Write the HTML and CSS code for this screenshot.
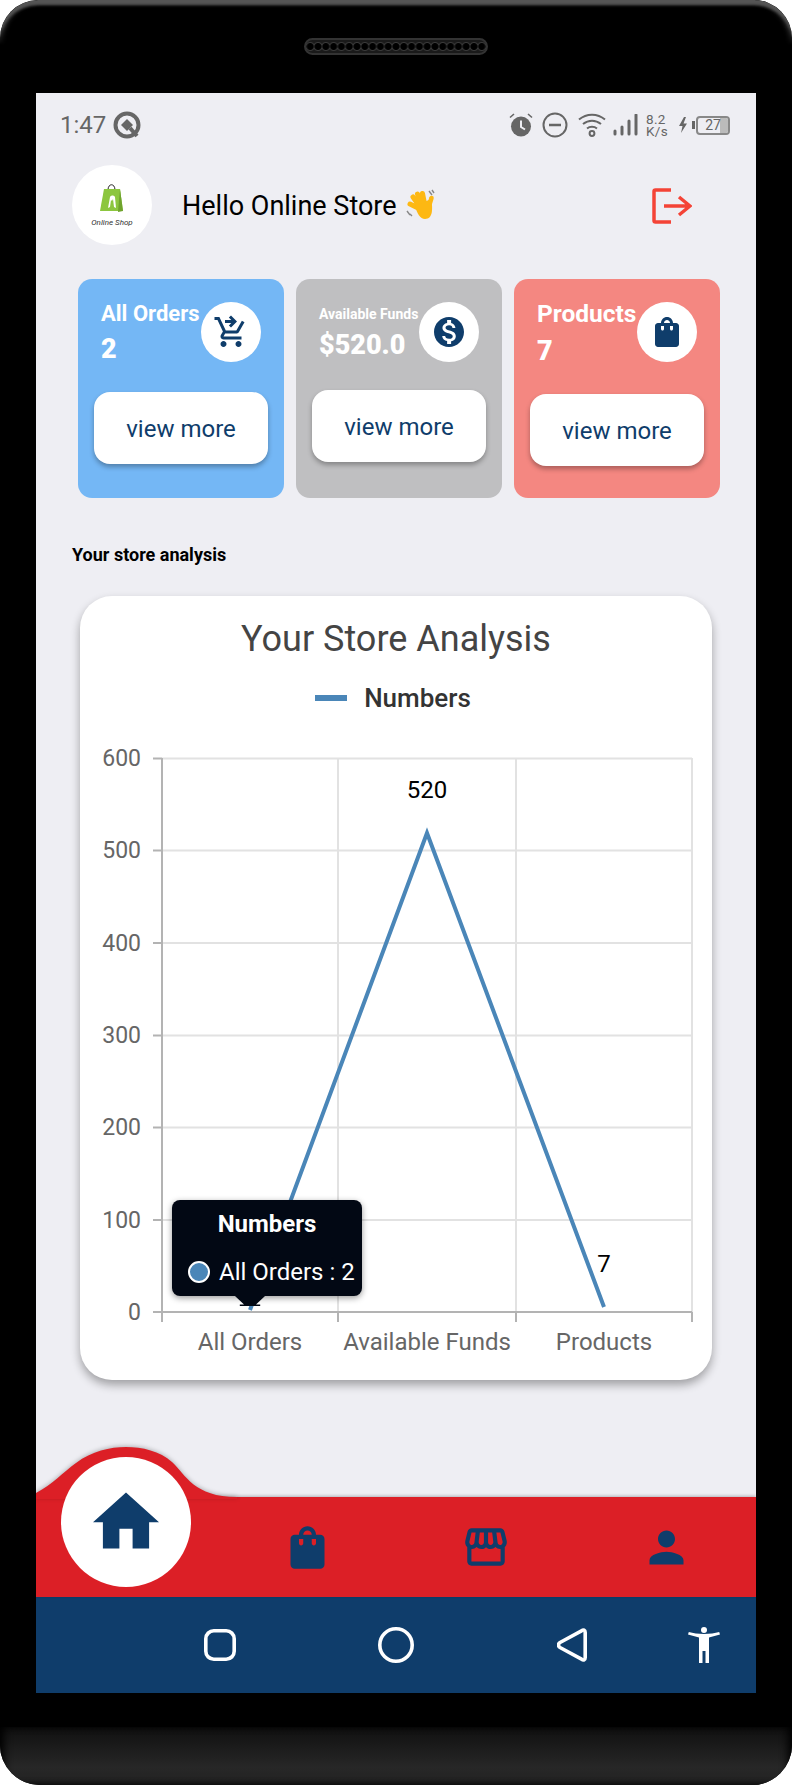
FILE: index.html
```html
<!DOCTYPE html>
<html lang="en">
<head>
    <meta charset="UTF-8">
    <meta name="viewport" content="width=device-width, initial-scale=1.0">
    <title>Online Store</title>
    <link rel="stylesheet" href="styles.css">
</head>
<body>
    <div class="phone">
        <div class="phone-top">
            <div class="speaker"></div>
        </div>

        <div class="screen">
            <!-- Status bar -->
            <div class="status-bar">
                <div class="status-left">
                    <span class="status-time">1:47</span>
                    <svg class="status-q" viewBox="0 0 28 28" width="28" height="28">
                        <circle cx="14" cy="14" r="11.5" fill="none" stroke="#666" stroke-width="4"/>
                        <path d="M14 8l6 6-6 6-6-6z" fill="#666"/>
                        <path d="M17 17l7 8" stroke="#666" stroke-width="4"/>
                    </svg>
                </div>
                <div class="status-right">
                    <svg class="icon-alarm" viewBox="0 0 24 24" width="24" height="24">
                        <circle cx="12" cy="13.5" r="10" fill="#666"/>
                        <path d="M12 7.5v6.5l4 2.5" fill="none" stroke="#eeeef3" stroke-width="2"/>
                        <path d="M1 4.5L5 1M23 4.5L19 1" stroke="#666" stroke-width="1.6"/>
                    </svg>
                    <svg class="icon-dnd" viewBox="0 0 26 26" width="26" height="26">
                        <circle cx="13" cy="13" r="11.5" fill="none" stroke="#666" stroke-width="2"/>
                        <path d="M7 13h12" stroke="#666" stroke-width="2.6"/>
                    </svg>
                    <svg class="icon-wifi" viewBox="0 0 28 24" width="28" height="24">
                        <path d="M1 6.5C8.5 0 19.5 0 27 6.5M5 11C10.5 6.5 17.5 6.5 23 11M9 15.5C11.8 13.3 16.2 13.3 19 15.5" fill="none" stroke="#666" stroke-width="2"/>
                        <circle cx="14" cy="20.5" r="2.4" fill="none" stroke="#666" stroke-width="2"/>
                    </svg>
                    <svg class="icon-signal" viewBox="0 0 26 22" width="26" height="22">
                        <path d="M2 20v-3M9 20v-7M16 20V7M23 20V1" stroke="#666" stroke-width="3" stroke-linecap="round"/>
                    </svg>
                    <div class="net-speed">8.2<br>K/s</div>
                    <svg class="icon-bolt" viewBox="0 0 18 16" width="18" height="16">
                        <path d="M6 0L1 9h3.5L3 16l6-9.5H5.5L8 0z" fill="#666"/>
                        <rect x="14" y="4" width="3" height="8" fill="#666"/>
                    </svg>
                    <div class="battery"><span class="battery-level"></span><span class="battery-text">27</span></div>
                </div>
            </div>

            <!-- Header -->
            <div class="header">
                <div class="avatar">
                    <svg viewBox="0 0 24 32" width="24" height="32">
                        <path d="M8 7C8 0 15 0 15 7" fill="none" stroke="#222" stroke-width="1"/>
                        <path d="M4 6h16l3 22H0z" fill="#8cc63f"/>
                        <path d="M20 6l3 22-5 1z" fill="#6fa32d"/>
                        <path d="M8 25l2-11c1-2 4-2 5 0l1 11-2-1-1-8-1 2-1-1-1 7z" fill="#fff"/>
                    </svg>
                    <span class="avatar-text">Online Shop</span>
                </div>
                <h1 class="hello">Hello Online Store</h1>
                <svg class="wave" viewBox="0 0 34 32" width="34" height="32">
                    <path d="M24 3l3 4M27 2l2 3M2 23l3 4M5 26l2 2" stroke="#888" stroke-width="1.4" fill="none"/>
                    <g stroke="#fdb813" stroke-width="5" stroke-linecap="round">
                        <path d="M15 21L5 16M15 19L8 9M17 18L12.5 6M20 18L17.5 5.5"/>
                        <path d="M24 18L26.5 10" stroke-width="4.5"/>
                    </g>
                    <path d="M10 18L26 11C28 20 28 31 20 31 15 31 12 25 10 18z" fill="#fdb813"/>
                </svg>
                <svg class="logout" viewBox="0 0 40 36" width="40" height="36">
                    <path d="M19 2H3.5a1.5 1.5 0 0 0-1.5 1.5v29A1.5 1.5 0 0 0 3.5 34H19" fill="none" stroke="#f44336" stroke-width="3.5"/>
                    <path d="M12 18h26M27 9l11 9-11 9" fill="none" stroke="#f44336" stroke-width="3.5"/>
                </svg>
            </div>

            <!-- Summary cards -->
            <div class="cards">
                <div class="card card-blue">
                    <div class="card-top">
                        <div class="card-info">
                            <div class="card-title">All Orders</div>
                            <div class="card-value">2</div>
                        </div>
                        <div class="card-icon">
                            <svg viewBox="0 0 24 24" width="36" height="36"><path d="M15.55 13c.75 0 1.41-.41 1.75-1.03L21 5.48 19.25 4.5l-3.7 6.5H8.53L4.27 2H1v2h2l3.6 7.59-1.35 2.44C4.52 15.37 5.48 17 7 17h12v-2H7l1.1-2h7.45zM7 18c-1.1 0-1.99.9-1.99 2S5.9 22 7 22s2-.9 2-2-.9-2-2-2zm10 0c-1.1 0-1.99.9-1.99 2s.89 2 1.99 2 2-.9 2-2-.9-2-2-2zM12 1l4 4-4 4-1.41-1.41L12.17 6H8V4h4.17l-1.59-1.59z"/></svg>
                        </div>
                    </div>
                    <button class="card-btn">view more</button>
                </div>
                <div class="card card-gray">
                    <div class="card-top">
                        <div class="card-info">
                            <div class="card-title">Available Funds</div>
                            <div class="card-value">$520.0</div>
                        </div>
                        <div class="card-icon">
                            <svg viewBox="0 0 24 24" width="36" height="36"><path d="M12 2C6.48 2 2 6.48 2 12s4.48 10 10 10 10-4.48 10-10S17.52 2 12 2zm1.41 16.09V20h-2.67v-1.93c-1.71-.36-3.16-1.46-3.27-3.4h1.96c.1 1.05.82 1.87 2.65 1.87 1.96 0 2.4-.98 2.4-1.59 0-.83-.44-1.61-2.67-2.14-2.48-.6-4.18-1.62-4.18-3.67 0-1.72 1.39-2.84 3.11-3.21V4h2.67v1.95c1.86.45 2.79 1.86 2.87 3.39H14.3c-.05-1.11-.64-1.87-2.22-1.87-1.5 0-2.4.68-2.4 1.64 0 .84.65 1.39 2.67 1.91s4.18 1.39 4.18 3.91c-.01 1.83-1.38 2.83-3.12 3.16z"/></svg>
                        </div>
                    </div>
                    <button class="card-btn">view more</button>
                </div>
                <div class="card card-red">
                    <div class="card-top">
                        <div class="card-info">
                            <div class="card-title">Products</div>
                            <div class="card-value">7</div>
                        </div>
                        <div class="card-icon">
                            <svg viewBox="0 0 24 24" width="36" height="36"><path d="M18 6h-2c0-2.21-1.79-4-4-4S8 3.79 8 6H6c-1.1 0-2 .9-2 2v12c0 1.1.9 2 2 2h12c1.1 0 2-.9 2-2V8c0-1.1-.9-2-2-2zm-8 4c0 .55-.45 1-1 1s-1-.45-1-1V8h2v2zm2-6c1.1 0 2 .9 2 2h-4c0-1.1.9-2 2-2zm4 6c0 .55-.45 1-1 1s-1-.45-1-1V8h2v2z"/></svg>
                        </div>
                    </div>
                    <button class="card-btn">view more</button>
                </div>
            </div>

            <h2 class="section-title">Your store analysis</h2>

            <!-- Chart -->
            <div class="chart-card">
                <div class="chart-title">Your Store Analysis</div>
                <div class="chart-legend"><span class="legend-line"></span>Numbers</div>
                <div class="chart-wrap">
                    <svg class="chart" viewBox="0 -10 632 622" width="632" height="622">
                        <g class="grid">
                            <path d="M82 10.5H612M82 102.5H612M82 195H612M82 287.5H612M82 379.5H612M82 472H612"/>
                            <path d="M258 10V564M436 10V564M612 10V564"/>
                        </g>
                        <g class="axis">
                            <path d="M82 10V574M258 564V574M436 564V574M612 564V574"/>
                            <path d="M73 10.5H82M73 102.5H82M73 195H82M73 287.5H82M73 379.5H82M73 472H82M73 564H612"/>
                        </g>
                        <g class="y-labels">
                            <text x="61" y="18">600</text>
                            <text x="61" y="110">500</text>
                            <text x="61" y="203">400</text>
                            <text x="61" y="295">300</text>
                            <text x="61" y="387">200</text>
                            <text x="61" y="480">100</text>
                            <text x="61" y="572">0</text>
                        </g>
                        <g class="x-labels">
                            <text x="170" y="602">All Orders</text>
                            <text x="347" y="602">Available Funds</text>
                            <text x="524" y="602">Products</text>
                        </g>
                        <polyline class="line" points="170,562 347,85 524,559"/>
                        <g class="point-labels">
                            <text x="347" y="50">520</text>
                            <text x="524" y="524">7</text>
                        </g>
                    </svg>
                    <div class="tooltip">
                        <div class="tooltip-title">Numbers</div>
                        <div class="tooltip-row"><span class="tooltip-dot"></span>All Orders : 2</div>
                    </div>
                </div>
            </div>

            <!-- Bottom nav -->
            <div class="bottom-nav">
                <svg class="nav-hump" viewBox="0 0 202 52" width="202" height="52">
                    <path d="M0 46C17 37 26 26 40 16 56 4 74 0 90 0 106 0 124 4 136 15 150 28 158 50 201 50V52H0Z" fill="#dc1f26"/>
                </svg>
                <div class="nav-item">
                    <div class="nav-home">
                        <svg viewBox="2 3 20 17" width="66" height="57"><path d="M10 20v-6h4v6h5v-8h3L12 3 2 12h3v8z"/></svg>
                    </div>
                </div>
                <div class="nav-item">
                    <svg viewBox="0 0 24 24" width="51" height="51"><path d="M18 6h-2c0-2.21-1.79-4-4-4S8 3.79 8 6H6c-1.1 0-2 .9-2 2v12c0 1.1.9 2 2 2h12c1.1 0 2-.9 2-2V8c0-1.1-.9-2-2-2zm-8 4c0 .55-.45 1-1 1s-1-.45-1-1V8h2v2zm2-6c1.1 0 2 .9 2 2h-4c0-1.1.9-2 2-2zm4 6c0 .55-.45 1-1 1s-1-.45-1-1V8h2v2z"/></svg>
                </div>
                <div class="nav-item">
                    <svg viewBox="0 0 24 24" width="50" height="50"><path d="M21.9 8.89l-1.05-4.37c-.22-.9-1-1.52-1.91-1.52H5.05c-.9 0-1.69.63-1.9 1.52L2.1 8.89c-.24 1.02-.02 2.06.62 2.88.08.11.19.19.28.29V19c0 1.1.9 2 2 2h14c1.1 0 2-.9 2-2v-6.94c.09-.09.2-.18.28-.28.64-.82.87-1.87.62-2.89zm-2.99-3.9l1.05 4.37c.1.42.01.84-.25 1.17-.14.18-.44.47-.94.47-.61 0-1.14-.49-1.21-1.14L16.98 5l1.93-.01zM13 5h1.96l.54 4.52c.05.39-.07.78-.33 1.07-.22.26-.54.41-.95.41-.67 0-1.22-.59-1.22-1.31V5zM8.49 9.52L9.04 5H11v4.69c0 .72-.55 1.31-1.29 1.31-.34 0-.65-.15-.89-.41-.25-.29-.37-.68-.33-1.07zm-4.45-.16L5.05 5h1.97l-.58 4.86c-.08.65-.6 1.14-1.21 1.14-.49 0-.8-.29-.93-.47-.27-.32-.36-.75-.26-1.17zM5 19v-6.03c.08.01.15.03.23.03.87 0 1.66-.36 2.24-.95.6.6 1.4.95 2.31.95.87 0 1.65-.36 2.23-.93.59.57 1.39.93 2.29.93.84 0 1.64-.35 2.24-.95.58.59 1.37.95 2.24.95.08 0 .15-.02.23-.03V19H5z"/></svg>
                </div>
                <div class="nav-item">
                    <svg viewBox="0 0 24 24" width="51" height="51"><path d="M12 12c2.21 0 4-1.79 4-4s-1.79-4-4-4-4 1.79-4 4 1.79 4 4 4zm0 2c-2.67 0-8 1.34-8 4v2h16v-2c0-2.66-5.33-4-8-4z"/></svg>
                </div>
            </div>

            <!-- Android keys -->
            <div class="system-nav">
                <svg viewBox="0 0 32 32" width="32" height="32"><rect x="1.8" y="1.8" width="28.4" height="28.4" rx="8" fill="none" stroke="#fff" stroke-width="3.6"/></svg>
                <svg viewBox="0 0 36 36" width="36" height="36"><circle cx="18" cy="18" r="16.2" fill="none" stroke="#fff" stroke-width="3.6"/></svg>
                <svg viewBox="0 0 30 34" width="30" height="34"><path d="M24.5 2.8C26.5 1.2 28.2 2 28.2 4.5V29.5C28.2 32 26.5 32.8 24.5 31.2L3 19.5C1 18.3 1 15.7 3 14.5Z" fill="none" stroke="#fff" stroke-width="3.6" stroke-linejoin="round"/></svg>
                <svg viewBox="0 0 32 36" width="32" height="36"><circle cx="16" cy="3" r="3" fill="#fff"/><path d="M0 7.5L.8 5C9 7.5 23 7.5 31.2 5L32 7.5 21 10.5V36H17.5V24H14.5V36H11V10.5z" fill="#fff"/></svg>
            </div>
        </div>

        <div class="phone-chin"></div>
        <div class="phone-bottom"></div>
    </div>
</body>
</html>
```

FILE: styles.css
```css
* {
    box-sizing: border-box;
}

body {
    margin: 0;
    background-color: #fff;
    font-family: Roboto, "Liberation Sans", sans-serif;
}

.phone {
    width: 792px;
    height: 1785px;
    background-color: #000;
    border-radius: 38px 38px 40px 40px;
    overflow: hidden;
    display: flex;
    flex-direction: column;
}

.phone-top {
    position: relative;
    height: 93px;
    padding-top: 38px;
    display: flex;
    justify-content: center;
}

/* rim of the case, fades out on the sides */
.phone-top::before {
    content: "";
    position: absolute;
    left: 0;
    right: 0;
    top: 0;
    height: 60px;
    border-radius: 38px 38px 0 0;
    box-shadow: inset 0 7px 3px -2px #555, inset 3px 3px 5px -1px #444, inset -3px 3px 5px -1px #444;
    -webkit-mask-image: linear-gradient(#000 45%, transparent 75%);
    mask-image: linear-gradient(#000 45%, transparent 75%);
}

.speaker {
    width: 184px;
    height: 17px;
    border-radius: 9px;
    border: 2px solid #333;
    background-color: #111;
    background-image: radial-gradient(circle at center, #000 3px, #3a3a3a 4px, #1a1a1a 5px);
    background-size: 7.8px 13px;
    background-position: center;
}

.screen {
    width: 720px;
    height: 1600px;
    margin: 0 auto;
    background-color: #eeeef3;
    display: flex;
    flex-direction: column;
}

.phone-chin {
    height: 34px;
}

.phone-bottom {
    flex: 1;
    background: linear-gradient(#101010, #272727 70%, #222);
    box-shadow: inset 6px 0 8px -2px #000, inset -6px 0 8px -2px #000;
}

/* status bar */
.status-bar {
    height: 60px;
    padding: 4px 26px 0 24px;
    display: flex;
    justify-content: space-between;
    align-items: center;
    color: #666;
}

.status-left {
    display: flex;
    align-items: center;
    gap: 7px;
}

.status-time {
    font-size: 24px;
}

.status-right {
    display: flex;
    align-items: center;
    gap: 8px;
}

.icon-alarm {
    margin-right: 1px;
}

.icon-dnd {
    margin-right: 2px;
}

.icon-wifi,
.icon-signal {
    margin-right: -1px;
}

.net-speed {
    width: 21px;
    font-size: 13.5px;
    line-height: 12.5px;
    letter-spacing: .3px;
    white-space: nowrap;
}

.icon-bolt {
    margin-left: 3px;
    margin-right: -8px;
}

.battery {
    position: relative;
    width: 34px;
    height: 19px;
    border: 2px solid #888;
    border-radius: 4px;
    font-size: 14px;
    line-height: 15px;
    text-align: center;
    overflow: hidden;
}

.battery-level {
    position: absolute;
    top: 0;
    right: 0;
    bottom: 0;
    width: 8px;
    background-color: #bbb;
}

.battery-text {
    position: relative;
}

/* header */
.header {
    height: 80px;
    margin-top: 12px;
    padding: 0 64px 0 36px;
    display: flex;
    align-items: center;
}

.avatar {
    width: 80px;
    height: 80px;
    border-radius: 50%;
    background-color: #fff;
    display: flex;
    flex-direction: column;
    align-items: center;
    padding-top: 18px;
    margin-right: 30px;
}

.avatar-text {
    font-size: 8px;
    font-style: italic;
    color: #333;
    margin-top: 3px;
    white-space: nowrap;
}

.hello {
    margin: 0;
    padding-top: 2px;
    font-size: 27px;
    font-weight: 400;
    color: #000;
}

.wave {
    margin-left: 8px;
    margin-top: -2px;
}

.logout {
    margin-left: auto;
    margin-top: 2px;
}

/* cards */
.cards {
    margin-top: 34px;
    padding: 0 36px 0 42px;
    display: flex;
    gap: 12px;
}

.card {
    width: 206px;
    height: 219px;
    padding: 16px;
    border-radius: 14px;
    color: #fff;
}

.card-blue {
    background-color: #74b7f5;
}

.card-gray {
    background-color: #bfbfc1;
}

.card-red {
    background-color: #f48781;
}

.card-top {
    display: flex;
    justify-content: space-between;
    align-items: flex-start;
    padding: 7px 0 0 7px;
    height: 97px;
}

.card-info {
    white-space: nowrap;
}

.card-title {
    font-size: 22px;
    font-weight: 700;
    line-height: 24px;
}

.card-value {
    font-size: 27px;
    font-weight: 900;
    line-height: 32px;
    margin-top: 7px;
}

.card-gray .card-title {
    font-size: 14px;
}

.card-gray .card-value {
    margin-top: 3px;
}

.card-red .card-title {
    font-size: 24.5px;
}

.card-red .card-value {
    margin-top: 9px;
}

.card-icon {
    width: 60px;
    height: 60px;
    border-radius: 50%;
    background-color: #fff;
    margin-right: 7px;
    flex-shrink: 0;
    display: flex;
    align-items: center;
    justify-content: center;
    fill: #0f3d6b;
}

.card-btn {
    width: 174px;
    height: 72px;
    padding: 2px 0 0;
    border: none;
    border-radius: 16px;
    background-color: #fff;
    color: #0f3d6b;
    font-family: inherit;
    font-size: 24px;
    box-shadow: 0 3px 5px rgba(0, 0, 0, 0.3);
}

.card-gray .card-btn {
    margin-top: -2px;
}

.card-red .card-btn {
    margin-top: 2px;
}

/* chart */
.section-title {
    margin: 46px 0 0 36px;
    font-size: 18px;
    font-weight: 700;
    line-height: 22px;
    color: #000;
}

.chart-card {
    position: relative;
    width: 632px;
    height: 784px;
    margin: 30px 0 0 44px;
    border-radius: 32px;
    background-color: #fff;
    box-shadow: 0 5px 10px rgba(0, 0, 0, 0.33);
}

.chart-title {
    padding-top: 19px;
    text-align: center;
    font-size: 36px;
    line-height: 48px;
    color: #444;
}

.chart-legend {
    margin-top: 20px;
    padding-right: 6px;
    display: flex;
    justify-content: center;
    align-items: center;
    gap: 17px;
    font-size: 26px;
    font-weight: 500;
    line-height: 30px;
    color: #333;
}

.legend-line {
    width: 32px;
    height: 6px;
    background-color: #4a86b8;
}

.chart-wrap {
    position: absolute;
    left: 0;
    top: 142px;
}

.chart {
    display: block;
}

.chart text {
    font-family: Roboto, "Liberation Sans", sans-serif;
    font-size: 23px;
}

.chart .x-labels text,
.chart .point-labels text {
    font-size: 24px;
}

.grid path {
    fill: none;
    stroke: #e2e2e2;
    stroke-width: 2;
}

.axis path {
    fill: none;
    stroke: #b3b3b3;
    stroke-width: 2;
}

.y-labels text {
    fill: #666;
    text-anchor: end;
}

.x-labels text {
    fill: #666;
    text-anchor: middle;
}

.point-labels text {
    fill: #000;
    text-anchor: middle;
}

.line {
    fill: none;
    stroke: #4a86b8;
    stroke-width: 4;
}

.tooltip {
    position: absolute;
    left: 92px;
    top: 462px;
    width: 190px;
    height: 96px;
    padding-top: 10px;
    border-radius: 8px;
    background-color: #020814;
    color: #fff;
    font-size: 24px;
    box-shadow: 0 2px 6px rgba(0, 0, 0, 0.4);
}

.tooltip::after {
    content: "";
    position: absolute;
    left: 63px;
    top: 96px;
    width: 30px;
    height: 10px;
    background-color: #020814;
    clip-path: polygon(0 0, 100% 0, 70% 85%, 84% 85%, 84% 100%, 16% 100%, 16% 85%, 30% 85%);
}

.tooltip-title {
    text-align: center;
    font-weight: 700;
    line-height: 28px;
}

.tooltip-row {
    margin-top: 20px;
    padding-left: 16px;
    display: flex;
    align-items: center;
    gap: 9px;
    white-space: nowrap;
    line-height: 28px;
}

.tooltip-dot {
    width: 22px;
    height: 22px;
    border: 2px solid #fff;
    border-radius: 50%;
    background-color: #4a86b8;
}

/* bottom nav */
.bottom-nav {
    position: relative;
    margin-top: auto;
    height: 100px;
    background-color: #dc1f26;
    box-shadow: 0 -1px 3px rgba(0, 0, 0, 0.25);
    display: grid;
    grid-template-columns: repeat(4, 180px);
    fill: #0f3d6b;
}

.nav-hump {
    position: absolute;
    left: 0;
    top: -50px;
    filter: drop-shadow(0 -1px 2px rgba(0, 0, 0, 0.25));
}

.nav-item {
    display: flex;
    align-items: center;
    justify-content: center;
}

.nav-item:nth-child(3) {
    padding-left: 2px;
}

.nav-home {
    position: absolute;
    left: 25px;
    top: -40px;
    width: 130px;
    height: 130px;
    border-radius: 50%;
    background-color: #fff;
    display: flex;
    align-items: center;
    justify-content: center;
}

.nav-home svg {
    margin-bottom: 4px;
}

.system-nav {
    height: 96px;
    padding-left: 96px;
    background-color: #0f3d6b;
    display: grid;
    grid-template-columns: 176px 176px 176px 88px;
    align-items: center;
    justify-items: center;
}
```
